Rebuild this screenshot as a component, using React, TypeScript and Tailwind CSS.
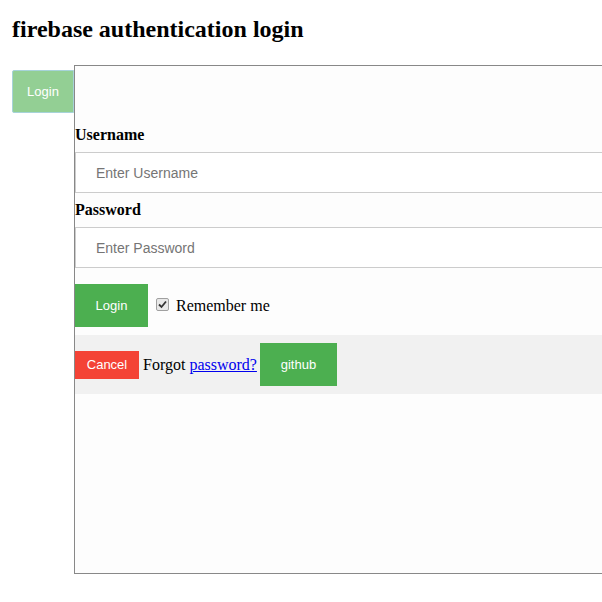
import React, { useState } from 'react';

export default function App() {
  const [remember, setRemember] = useState(true);

  return (
    <div className="w-full h-screen overflow-hidden bg-white text-black font-['Liberation_Serif',serif]">
      <h2 className="ml-[12px] pt-[15px] text-[24px] font-bold leading-[28px]">
        firebase authentication login
      </h2>
      <div className="flex mt-[22px]">
        {/* Tab */}
        <div className="ml-[12px] mt-[5px]">
          <button
            type="button"
            className="w-[62px] h-[43px] bg-[#93cf94] border border-[#a6d3d9] rounded-l-[2px] text-white text-[13px] font-['Liberation_Sans',Arial,sans-serif]"
          >
            Login
          </button>
        </div>
        {/* Panel */}
        <div className="w-[560px] shrink-0 h-[509px] border border-[#888888] bg-[#fdfdfd] pt-[60px]">
          <form className="flex flex-col" onSubmit={(e) => e.preventDefault()}>
            <label className="text-[16px] font-bold leading-[18px]">Username</label>
            <input
              type="text"
              placeholder="Enter Username"
              className="my-[8px] h-[41px] w-full border border-[#cccccc] bg-white pl-[20px] text-[14px] font-['Liberation_Sans',Arial,sans-serif] placeholder:text-[#757575] outline-none"
            />
            <label className="text-[16px] font-bold leading-[18px]">Password</label>
            <input
              type="password"
              placeholder="Enter Password"
              className="mt-[8px] h-[41px] w-full border border-[#cccccc] bg-white pl-[20px] text-[14px] font-['Liberation_Sans',Arial,sans-serif] placeholder:text-[#757575] outline-none"
            />
            <div className="flex items-center mt-[16px]">
              <button
                type="submit"
                className="w-[73px] h-[43px] bg-[#4caf50] text-white text-[13px] font-['Liberation_Sans',Arial,sans-serif]"
              >
                Login
              </button>
              <label className="flex items-center ml-[8px] text-[16px] cursor-pointer">
                <input
                  type="checkbox"
                  checked={remember}
                  onChange={() => setRemember((v) => !v)}
                  className="peer sr-only"
                />
                <span className="w-[13px] h-[13px] mr-[7px] -mt-[3px] rounded-[2px] border border-[#a0a0a0] bg-[#e8e8e8] flex items-center justify-center">
                  {remember && (
                    <svg width="9" height="9" viewBox="0 0 9 9">
                      <path d="M1 4.5 L3.5 7 L8 1.5" fill="none" stroke="#333333" strokeWidth="1.8" />
                    </svg>
                  )}
                </span>
                Remember me
              </label>
            </div>
          </form>
          <div className="mt-[8px] h-[59px] bg-[#f1f1f1] flex items-center text-[16px]">
            <button
              type="button"
              className="w-[64px] h-[28px] bg-[#f44336] text-white text-[13px] font-['Liberation_Sans',Arial,sans-serif] mt-[1px]"
            >
              Cancel
            </button>
            <span className="ml-[4px]">
              Forgot{' '}
              <a href="#" className="text-[#0000ee] underline">
                password?
              </a>
            </span>
            <button
              type="button"
              className="ml-[3px] w-[77px] h-[43px] bg-[#4caf50] text-white text-[13px] font-['Liberation_Sans',Arial,sans-serif]"
            >
              github
            </button>
          </div>
        </div>
      </div>
    </div>
  );
}
